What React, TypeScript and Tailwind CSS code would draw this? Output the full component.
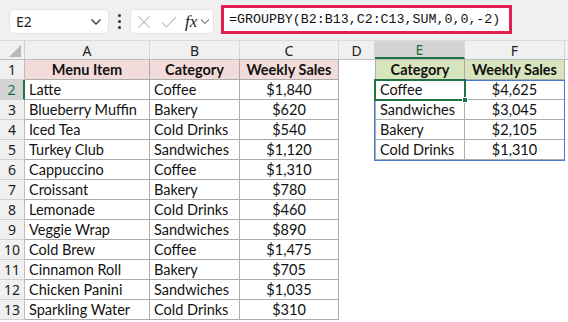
import React from "react";

const rows: [string, string, string][] = [
  ["Latte", "Coffee", "$1,840"],
  ["Blueberry Muffin", "Bakery", "$620"],
  ["Iced Tea", "Cold Drinks", "$540"],
  ["Turkey Club", "Sandwiches", "$1,120"],
  ["Cappuccino", "Coffee", "$1,310"],
  ["Croissant", "Bakery", "$780"],
  ["Lemonade", "Cold Drinks", "$460"],
  ["Veggie Wrap", "Sandwiches", "$890"],
  ["Cold Brew", "Coffee", "$1,475"],
  ["Cinnamon Roll", "Bakery", "$705"],
  ["Chicken Panini", "Sandwiches", "$1,035"],
  ["Sparkling Water", "Cold Drinks", "$310"],
];

const summary: [string, string][] = [
  ["Coffee", "$4,625"],
  ["Sandwiches", "$3,045"],
  ["Bakery", "$2,105"],
  ["Cold Drinks", "$1,310"],
];

const cellFont = { fontFamily: "Lato, 'Noto Sans', sans-serif" };

export default function App() {
  const letters = ["A", "B", "C", "D", "E", "F"];
  const widths = ["w-[125px]", "w-[90px]", "w-[99px]", "w-[36px]", "w-[90px]", "w-[100px]"];
  return (
    <div className="w-[568px] h-[322px] overflow-hidden bg-white" style={{ fontFamily: "'Noto Sans', sans-serif" }}>
      {/* Formula bar area */}
      <div className="h-[41px] bg-[#f0f0f0] flex items-start border-b border-[#dadada]">
        <div className="ml-[9px] mt-[9px] w-[100px] h-[25px] bg-white rounded-[5px] border border-[#e3e3e3] flex items-center justify-between pl-[6px] pr-[6px]">
          <span className="text-[14px] text-[#222]">E2</span>
          <svg width="12" height="8" viewBox="0 0 12 8"><path d="M1.5 1.5 L6 6 L10.5 1.5" fill="none" stroke="#333" strokeWidth="1.3" /></svg>
        </div>
        <div className="ml-[8px] mt-[14px] flex flex-col gap-[3px] items-center w-[4px]">
          <div className="w-[3px] h-[3px] bg-[#333] rounded-full" />
          <div className="w-[3px] h-[3px] bg-[#333] rounded-full" />
          <div className="w-[3px] h-[3px] bg-[#333] rounded-full" />
        </div>
        <div className="ml-[9px] mt-[9px] w-[84px] h-[25px] bg-white rounded-[5px] border border-[#e3e3e3] flex items-center pl-[5px]">
          <svg width="14" height="14" viewBox="0 0 14 14" className="ml-[1px]"><path d="M1.5 1.5 L12.5 12.5 M12.5 1.5 L1.5 12.5" stroke="#c4c4c4" strokeWidth="1.2" /></svg>
          <svg width="16" height="14" viewBox="0 0 16 14" className="ml-[10px]"><path d="M1 7.5 L5.5 12 L15 2" fill="none" stroke="#c4c4c4" strokeWidth="1.2" /></svg>
          <span className="ml-[8px] text-[17px] italic text-[#222] leading-none" style={{ fontFamily: "'Liberation Serif', serif" }}>fx</span>
          <svg width="10" height="7" viewBox="0 0 10 7" className="ml-[3px]"><path d="M1 1.5 L5 5.5 L9 1.5" fill="none" stroke="#888" strokeWidth="1.1" /></svg>
        </div>
        <div className="ml-[7px] mt-[5px] w-[291px] h-[29px] bg-white border-[3px] border-[#e21f4f] flex items-center pl-[5px]">
          <span className="text-[13.3px] text-[#111]" style={{ fontFamily: "'Liberation Mono', monospace" }}>=GROUPBY(B2:B13,C2:C13,SUM,0,0,-2)</span>
        </div>
      </div>

      {/* Sheet */}
      <div className="relative">
        {/* Column header row */}
        <div className="flex h-[19px] bg-[#f0f0f0] border-b border-[#bdbdbd]">
          <div className="w-[25px] h-full border-r border-[#d0d0d0] relative">
            <svg width="12" height="12" viewBox="0 0 12 12" className="absolute right-[3px] bottom-[2px]"><path d="M12 0 L12 12 L0 12 Z" fill="#b8b8b8" /></svg>
          </div>
          {letters.map((l, i) => (
            <div
              key={l}
              className={`${widths[i]} h-full flex items-center justify-center text-[14px] border-r border-[#d6d6d6] ${
                l === "E" ? "bg-[#d3d3d3] text-[#1e6e42] border-b-2 border-b-[#217346]" : "text-[#222]"
              }`}
            >
              {l}
            </div>
          ))}
        </div>

        {/* Row 1 */}
        <div className="flex h-[20px]" style={cellFont}>
          <div className="w-[25px] h-full bg-[#f0f0f0] border-r border-b border-[#d0d0d0] border-r-[#bdbdbd] flex items-center justify-center text-[14px] text-[#222]" style={{ fontFamily: "'Noto Sans', sans-serif" }}>1</div>
          <div className="w-[125px] h-full bg-[#f2dcdb] border-r border-b border-[#ababab] flex items-center justify-center font-bold text-[14.5px] text-[#111]">Menu Item</div>
          <div className="w-[90px] h-full bg-[#f2dcdb] border-r border-b border-[#ababab] flex items-center justify-center font-bold text-[14.5px] text-[#111]">Category</div>
          <div className="w-[99px] h-full bg-[#f2dcdb] border-r border-b border-[#ababab] flex items-center justify-center font-bold text-[14.5px] text-[#111]">Weekly Sales</div>
          <div className="w-[36px] h-full" />
          <div className="w-[90px] h-full bg-[#d8e4bc] border-l border-r border-b border-[#ababab] flex items-center justify-center font-bold text-[14.5px] text-[#111]">Category</div>
          <div className="w-[100px] h-full bg-[#d8e4bc] border-r border-b border-[#ababab] flex items-center justify-center font-bold text-[14.5px] text-[#111]">Weekly Sales</div>
        </div>

        {rows.map((r, idx) => {
          const n = idx + 2;
          const s = summary[idx];
          return (
            <div key={n} className="flex h-[20px]" style={cellFont}>
              <div
                className={`w-[25px] h-full border-b border-[#d0d0d0] flex items-center justify-center text-[14px] ${
                  n === 2 ? "bg-[#d3d3d3] text-[#1e6e42] border-r-2 border-r-[#217346]" : "bg-[#f0f0f0] text-[#222] border-r border-r-[#bdbdbd]"
                }`}
                style={{ fontFamily: "'Noto Sans', sans-serif" }}
              >
                {n}
              </div>
              <div className="w-[125px] h-full border-r border-b border-[#ababab] flex items-center pl-[4px] text-[14.5px] text-[#111]">{r[0]}</div>
              <div className="w-[90px] h-full border-r border-b border-[#ababab] flex items-center pl-[4px] text-[14.5px] text-[#111]">{r[1]}</div>
              <div className="w-[99px] h-full border-r border-b border-[#ababab] flex items-center justify-center text-[14.5px] text-[#111]">{r[2]}</div>
              <div className="w-[36px] h-full" />
              {s ? (
                <>
                  <div className="w-[90px] h-full border-l border-r border-b border-[#ababab] flex items-center pl-[4px] text-[14.5px] text-[#111]">{s[0]}</div>
                  <div className="w-[100px] h-full border-r border-b border-[#ababab] flex items-center justify-center text-[14.5px] text-[#111]">{s[1]}</div>
                </>
              ) : null}
            </div>
          );
        })}

        {/* Spill range blue border */}
        <div className="absolute left-[374px] top-[39px] w-[191px] h-[81px] border-[1.5px] border-[#4a78cf] pointer-events-none" />
        {/* Active cell */}
        <div className="absolute left-[374px] top-[38px] w-[92px] h-[22px] border-2 border-[#217346] pointer-events-none" />
        <div className="absolute left-[462px] top-[56px] w-[6px] h-[6px] bg-[#217346] border border-white pointer-events-none" />
      </div>
    </div>
  );
}
